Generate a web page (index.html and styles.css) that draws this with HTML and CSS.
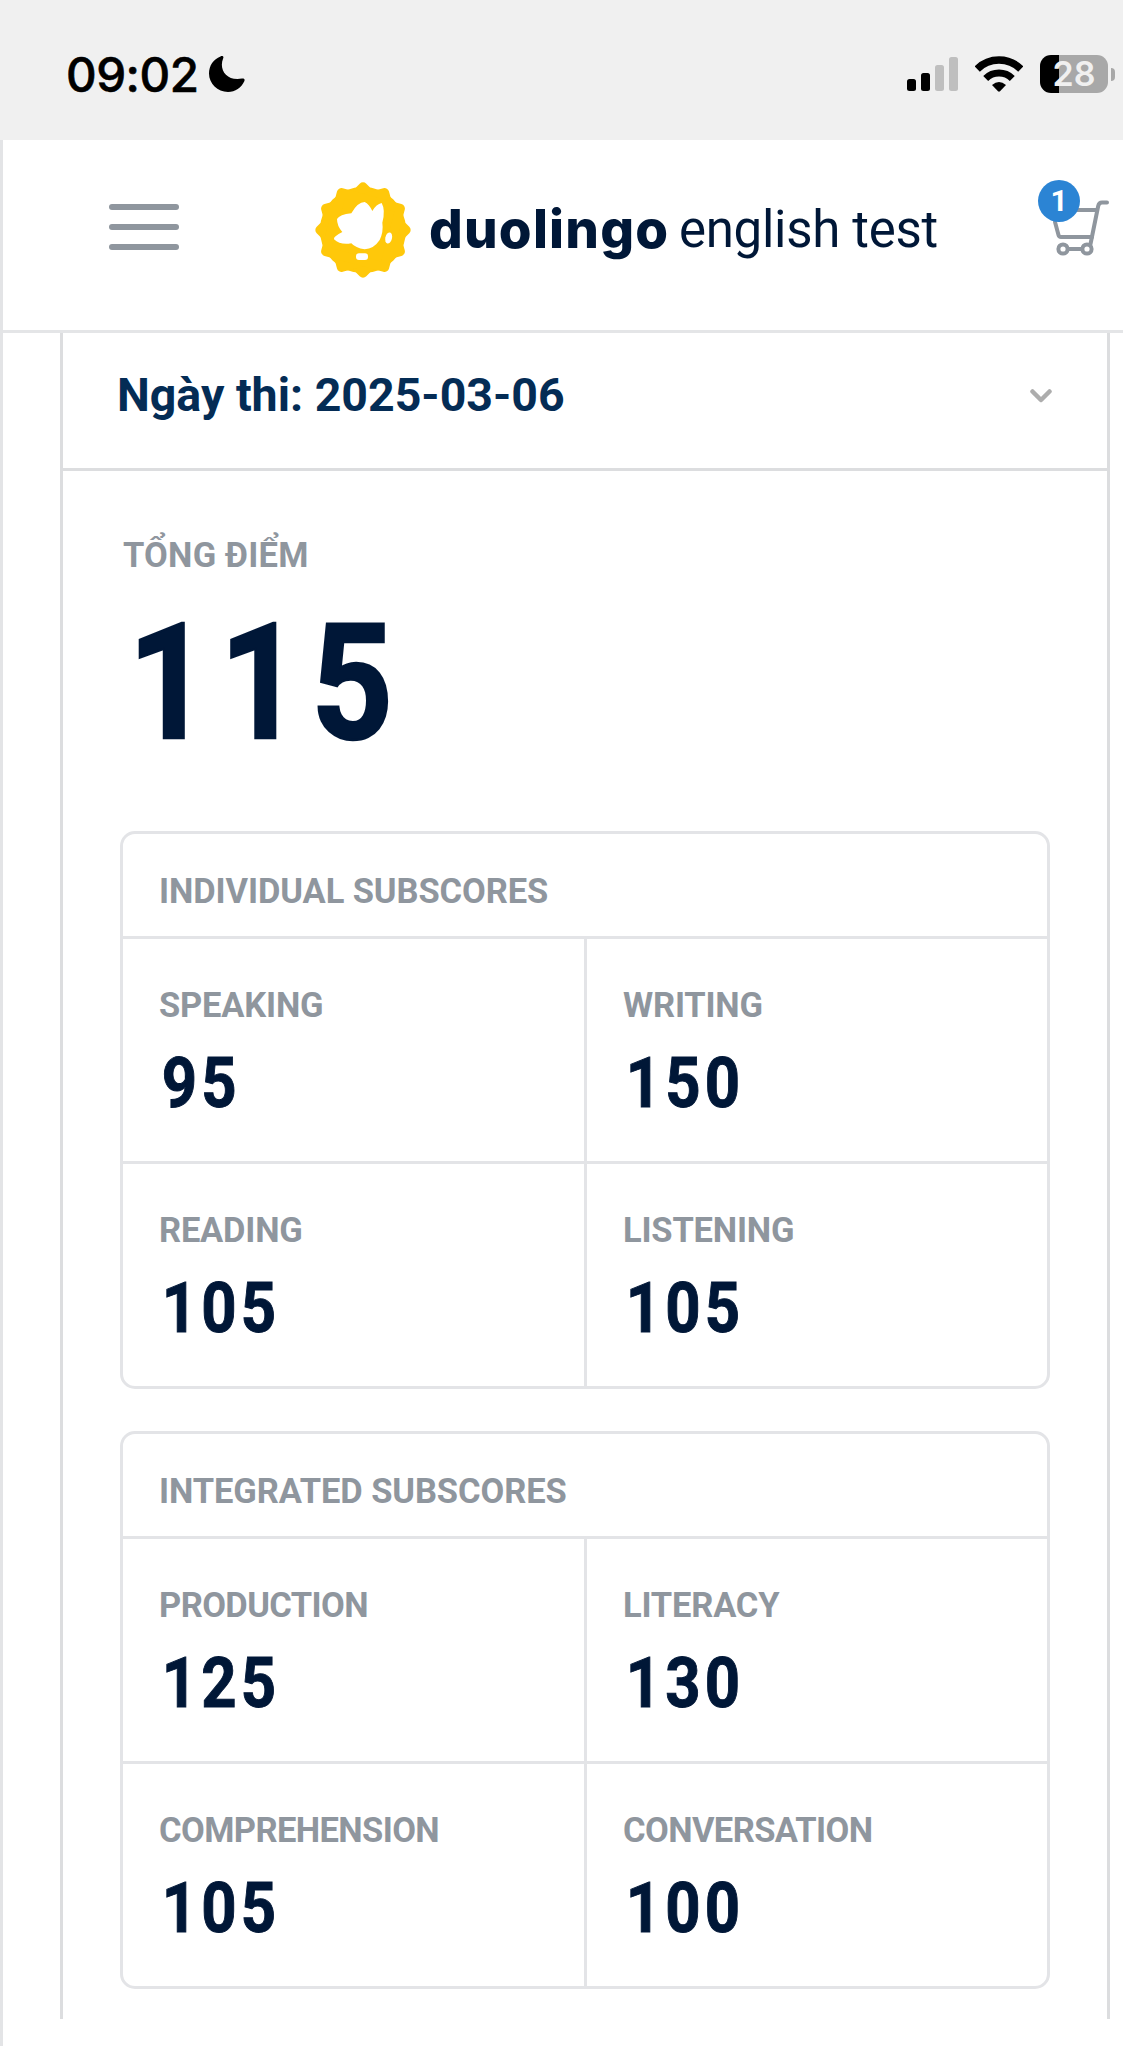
FILE: index.html
```html
<!DOCTYPE html>
<html lang="vi">
<head>
    <meta charset="UTF-8">
    <meta name="viewport" content="width=device-width, initial-scale=1.0">
    <title>Duolingo English Test</title>
    <link rel="stylesheet" href="styles.css">
</head>
<body>
    <div class="status-bar">
        <span class="time">09:02</span>
        <svg class="moon" viewBox="0 0 36 36">
            <path d="M11.500 .4C13.500-.4 15 .6 14.200 2.300C9.500 13.500 17.500 25.500 33 22.600C35 22.200 36.200 23.300 35.300 25.200C32.300 31.800 26.300 36 19 36C8.500 36 0 27.500 0 17.500C0 9.500 4.500 3 11.500 .4Z"/>
        </svg>
        <svg class="signal" viewBox="0 0 52 35">
            <rect x="0" y="22" width="9" height="12" rx="2.500"/>
            <rect x="14" y="16" width="9" height="18" rx="2.500"/>
            <rect x="28" y="8" width="9" height="26" rx="2.500" fill="#bfbfbf"/>
            <rect x="42" y="0" width="9" height="34" rx="2.500" fill="#bfbfbf"/>
        </svg>
        <svg class="wifi" viewBox="0 0 48 36">
            <path d="M2.200 13A31 31 0 0 1 45.800 13" fill="none" stroke="#000" stroke-width="7.500"/>
            <path d="M10.700 22.500A19 19 0 0 1 37.300 22.500" fill="none" stroke="#000" stroke-width="7"/>
            <path d="M17 29Q24 23 31 29L25 35.300Q24 36.200 23 35.300Z"/>
        </svg>
        <div class="battery">28</div>
        <div class="battery-tip"></div>
    </div>

    <div class="page">
        <header>
            <div class="menu">
                <span></span>
                <span></span>
                <span></span>
            </div>
            <svg class="logo" viewBox="46 66 288 288">
                <g fill="#ffc80a" stroke="#ffc80a" stroke-width="28" stroke-linejoin="round">
                    <circle cx="190" cy="210" r="115"/>
                    <path id="seal" d="M190 81L319 210L190 339L61 210Z"/>
                    <use href="#seal" transform="rotate(30 190 210)"/>
                    <use href="#seal" transform="rotate(60 190 210)"/>
                </g>
                <g fill="#fff">
                    <path d="M112 177Q120 164 155 160Q174 126 195 126Q208 132 218 153Q230 132 246 129Q258 150 248 188Q252 215 240 240Q222 267 195 268Q167 264 155 250Q122 256 103 238Q100 230 128 216Q112 198 112 177Z"/>
                    <ellipse cx="267" cy="234" rx="10" ry="17" transform="rotate(14 267 234)"/>
                    <rect x="169" y="280" width="36" height="20" rx="9"/>
                </g>
            </svg>
            <span class="brand">duolingo</span>
            <span class="product">english test</span>
            <div class="cart">
                <svg viewBox="0 0 72 80" fill="none" stroke="#8f969e" stroke-width="4" stroke-linecap="round" stroke-linejoin="round">
                    <path d="M69 24.500H64Q61 24.500 60.200 28L52.500 66"/>
                    <path d="M36 32H58M17 44L20.500 57Q21 59 23 59H54"/>
                    <circle cx="25" cy="71" r="4.600"/>
                    <circle cx="49" cy="71" r="4.600"/>
                    <path d="M30 71H44"/>
                </svg>
                <span class="badge">1</span>
            </div>
        </header>

        <main class="result">
            <div class="date-row">
                <span class="date">Ngày thi: 2025-03-06</span>
                <svg class="chevron" viewBox="0 0 22 14">
                    <path d="M2.500 2.500L11 11L19.500 2.500"/>
                </svg>
            </div>
            <div class="scores">
                <div class="total-label">TỔNG ĐIỂM</div>
                <div class="total">115</div>

                <section class="table">
                    <h2>INDIVIDUAL SUBSCORES</h2>
                    <div class="grid">
                        <div class="cell"><span>SPEAKING</span><b>95</b></div>
                        <div class="cell"><span>WRITING</span><b>150</b></div>
                        <div class="cell"><span>READING</span><b>105</b></div>
                        <div class="cell"><span>LISTENING</span><b>105</b></div>
                    </div>
                </section>

                <section class="table">
                    <h2>INTEGRATED SUBSCORES</h2>
                    <div class="grid">
                        <div class="cell"><span class="tight">PRODUCTION</span><b>125</b></div>
                        <div class="cell"><span>LITERACY</span><b>130</b></div>
                        <div class="cell"><span class="tight">COMPREHENSION</span><b>105</b></div>
                        <div class="cell"><span class="tight">CONVERSATION</span><b>100</b></div>
                    </div>
                </section>
            </div>
        </main>
    </div>
</body>
</html>
```
FILE: styles.css
```css
* {
    box-sizing: border-box;
}

body {
    margin: 0;
    background: #fff;
    font-family: Roboto, sans-serif;
    color: #001737;
}

svg {
    display: block;
    flex: none;
}

/* Phone status bar */
.status-bar {
    display: flex;
    align-items: center;
    height: 140px;
    padding: 8px 8px 0 65px;
    background: #f0f0f0;
    color: #000;
}

.time {
    width: 144px;
    padding-top: 1px;
    padding-left: 1px;
    font: 550 47.5px/60px Inter, sans-serif;
    letter-spacing: -0.5px;
    -webkit-text-stroke: 0.6px #000;
}

.moon {
    width: 36px;
    height: 36px;
}

.signal {
    width: 52px;
    height: 35px;
    margin-left: auto;
}

.wifi {
    width: 48px;
    height: 36px;
    margin: 0 17px 0 16px;
}

.battery {
    width: 68px;
    height: 38px;
    border-radius: 11px;
    background: linear-gradient(90deg, #000 19px, #a8a8a8 19px);
    color: #f0f0f0;
    font: 600 34px/38px Inter, sans-serif;
    text-align: center;
}

.battery-tip {
    width: 4px;
    height: 13px;
    margin-left: 3px;
    border-radius: 0 5px 5px 0;
    background: #a8a8a8;
}

/* Page */
.page {
    height: 1906px;
    border-left: 3px solid #e3e4e6;
}

header {
    display: flex;
    align-items: flex-start;
    height: 193px;
    padding: 42px 13px 0 106px;
    border-bottom: 3px solid #e4e5e7;
}

.menu {
    display: flex;
    flex-direction: column;
    gap: 14px;
    width: 70px;
    margin: 22px 136px 0 0;
}

.menu span {
    height: 6px;
    border-radius: 3px;
    background: #8f969e;
}

.logo {
    width: 96px;
    height: 96px;
}

.brand {
    width: 250px;
    margin: 15px 0 0 18px;
    font: 800 53px/64px Inter, sans-serif;
    letter-spacing: 1.2px;
}

.product {
    margin-top: 16px;
    font-size: 51px;
    line-height: 64px;
    letter-spacing: -0.3px;
    white-space: nowrap;
}

.cart {
    position: relative;
    width: 72px;
    height: 80px;
    margin: -4px 0 0 auto;
}

.badge {
    position: absolute;
    left: 0;
    top: 2px;
    width: 42px;
    height: 42px;
    border-radius: 50%;
    background: #2b84d4;
    color: #fff;
    font-size: 30px;
    font-weight: 700;
    line-height: 42px;
    text-align: center;
}

/* Test result */
.result {
    width: 1050px;
    height: 1686px;
    margin-left: 57px;
    border: 3px solid #dcdddf;
    border-width: 0 3px;
}

.date-row {
    display: flex;
    align-items: center;
    justify-content: space-between;
    height: 138px;
    padding: 0 55px 12px 54px;
    border-bottom: 3px solid #dcdddf;
}

.date {
    color: #042c55;
    font-size: 46.5px;
    font-weight: 700;
}

.chevron {
    width: 22px;
    height: 14px;
    margin-top: 3px;
    fill: none;
    stroke: #adadad;
    stroke-width: 4.5;
    stroke-linecap: round;
    stroke-linejoin: round;
}

.scores {
    padding: 64px 57px 0;
}

.total-label {
    padding-left: 3px;
    color: #8f969e;
    font-size: 34.5px;
    font-weight: 700;
    line-height: 40px;
    letter-spacing: 0.2px;
}

/* Condensed numerals */
.total,
.cell b {
    font-weight: 700;
    letter-spacing: 0.069em;
    -webkit-text-stroke: 0.014em #001737;
    transform: scaleX(0.88);
    transform-origin: left;
}

.total {
    margin: 28px 0 68px;
    padding-left: 9px;
    font-size: 162px;
    line-height: 160px;
}

.table {
    width: 930px;
    margin-bottom: 42px;
    border: 3px solid #e3e4e7;
    border-radius: 15px;
}

h2 {
    height: 102px;
    margin: 0;
    padding: 37px 0 0 36px;
    color: #8f969e;
    font-size: 34.5px;
    font-weight: 700;
    line-height: 40px;
    letter-spacing: -0.1px;
}

.grid {
    display: grid;
    grid-template-columns: 464px 460px;
}

.cell {
    display: flex;
    flex-direction: column;
    gap: 22px;
    height: 225px;
    padding: 46px 0 0 36px;
    border-top: 3px solid #e3e4e7;
}

.cell:nth-child(odd) {
    border-right: 3px solid #e3e4e7;
}

.cell span {
    color: #8f969e;
    font-size: 34.5px;
    font-weight: 700;
    line-height: 40px;
    letter-spacing: -0.2px;
}

.cell .tight {
    letter-spacing: -0.6px;
}

.cell b {
    padding-left: 3px;
    font-size: 70px;
    line-height: 72px;
}
```
